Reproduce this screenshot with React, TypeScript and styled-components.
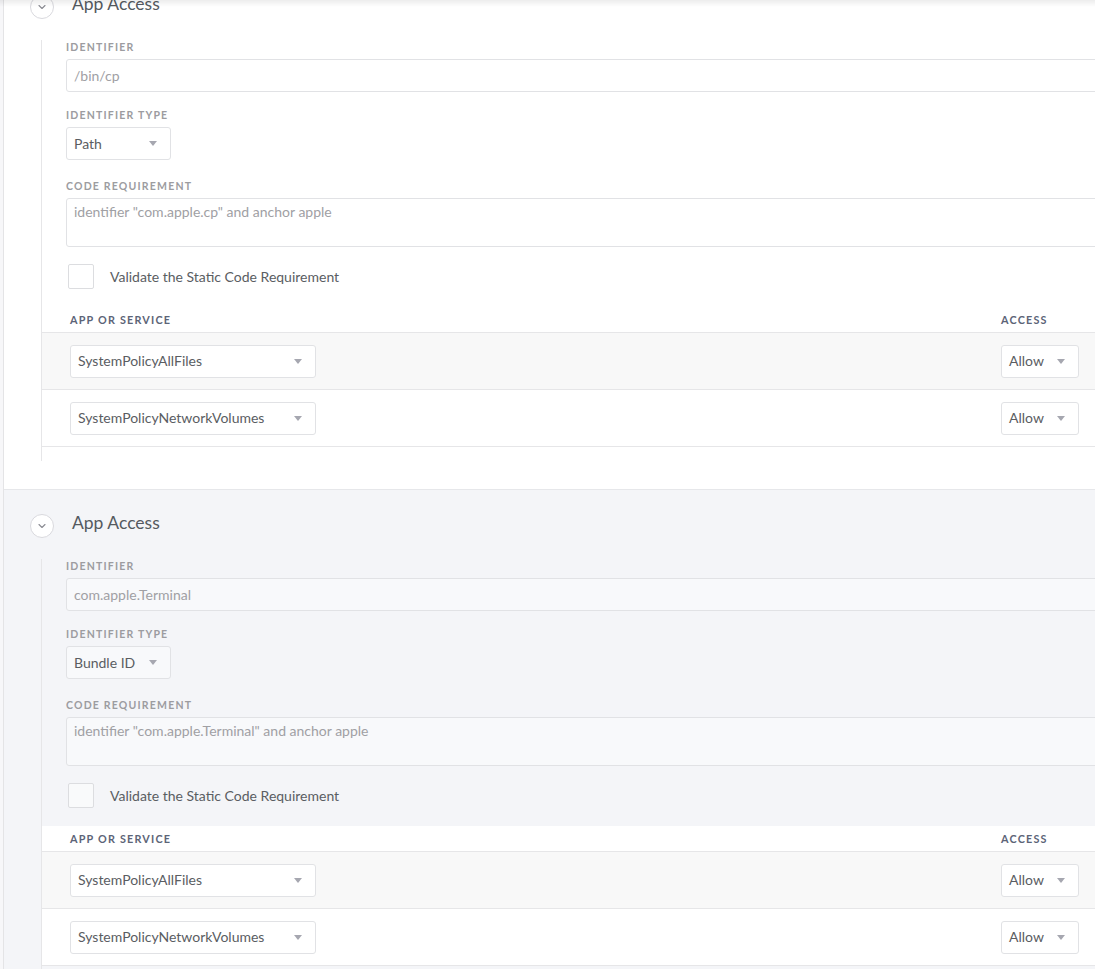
import React from "react";
import styled, { createGlobalStyle } from "styled-components";

const GlobalStyle = createGlobalStyle`
  html, body {
    margin: 0;
    padding: 0;
    background: #f7f7f9;
    overflow: hidden;
  }
  body {
    font-family: "Lato", "Liberation Sans", sans-serif;
    color: #555;
  }
`;

const TopShadow = styled.div`
  position: fixed;
  left: 0;
  top: 0;
  width: 100%;
  height: 7px;
  background: linear-gradient(to bottom, rgba(0, 0, 0, 0.07), rgba(0, 0, 0, 0));
  z-index: 5;
`;

const Page = styled.div`
  margin-top: -29px;
  margin-left: 3px;
  width: 1150px;
  border-left: 1px solid #e4e4e6;
  background: #ffffff;
`;

const Section = styled.section<{ $tinted?: boolean }>`
  background: ${(p) => (p.$tinted ? "#f4f5f8" : "#ffffff")};
  border-top: ${(p) => (p.$tinted ? "1px solid #e6e7ea" : "none")};
  padding: ${(p) => (p.$tinted ? "24px 0 29px 0" : "24px 0 28px 0")};
`;

const Header = styled.div`
  display: flex;
  align-items: center;
  gap: 18px;
  padding-left: 26px;
  height: 24px;
`;

const Toggle = styled.div`
  width: 24px;
  height: 24px;
  box-sizing: border-box;
  border-radius: 50%;
  border: 1px solid #d9d9de;
  background: #ffffff;
  display: flex;
  align-items: center;
  justify-content: center;
`;

const Title = styled.h2`
  margin: 0;
  font-size: 17.5px;
  font-weight: 400;
  color: #555a60;
  line-height: 20px;
  margin-top: -7px;
`;

const Body = styled.div`
  margin-top: 21px;
  margin-left: 37px;
  border-left: 1px solid #e6e6e8;
  padding-bottom: 14px;
`;

const Fields = styled.div`
  padding-left: 24px;
`;

const FieldGroup = styled.div<{ $space?: number }>`
  margin-top: ${(p) => p.$space ?? 0}px;
`;

const Label = styled.div`
  font-size: 10.5px;
  font-weight: 700;
  letter-spacing: 1.2px;
  text-transform: uppercase;
  color: #9c9ca0;
  line-height: 14px;
  margin-bottom: 5px;
`;

const Control = styled.div<{ $tinted?: boolean; $width?: number; $tall?: boolean }>`
  box-sizing: border-box;
  width: ${(p) => (p.$width ? `${p.$width}px` : "100%")};
  height: ${(p) => (p.$tall ? 49 : 33)}px;
  border: 1px solid #e1e2e5;
  border-radius: 3px;
  background: ${(p) => (p.$tinted ? "#f8f9fb" : "#ffffff")};
  padding: ${(p) => (p.$tall ? "4px 7px" : "0 7px")};
  display: flex;
  align-items: ${(p) => (p.$tall ? "flex-start" : "center")};
  font-size: 14px;
  line-height: 18px;
`;

const Value = styled.span<{ $muted?: boolean }>`
  color: ${(p) => (p.$muted ? "#a0a0a4" : "#5a5d62")};
  flex: 1;
  white-space: nowrap;
`;

const Caret = styled.span`
  width: 0;
  height: 0;
  border-left: 4px solid transparent;
  border-right: 4px solid transparent;
  border-top: 5px solid #a6a7b0;
  margin-right: 6px;
  margin-left: 8px;
`;

const CheckRow = styled.div`
  margin-top: 17px;
  display: flex;
  align-items: center;
  gap: 16px;
  padding-left: 2px;
`;

const Box = styled.div<{ $tinted?: boolean }>`
  width: 26px;
  height: 25px;
  box-sizing: border-box;
  border: 1px solid #dcdde0;
  border-radius: 2px;
  background: ${(p) => (p.$tinted ? "#f9fafb" : "#ffffff")};
`;

const CheckLabel = styled.span`
  font-size: 14px;
  color: #5a5d62;
`;

const Table = styled.div`
  margin-top: 18px;
  background: #ffffff;
`;

const Row = styled.div<{ $head?: boolean; $shade?: boolean }>`
  display: grid;
  grid-template-columns: 1fr 153px;
  align-items: center;
  height: ${(p) => (p.$head ? 25 : 56)}px;
  padding-left: 28px;
  border-bottom: 1px solid #e6e6e8;
  background: ${(p) => (p.$shade ? "#f8f8f8" : "#ffffff")};
`;

const HeadCell = styled.div`
  font-size: 10.8px;
  font-weight: 700;
  letter-spacing: 1.2px;
  text-transform: uppercase;
  color: #5c6477;
`;

const Chevron = () => (
  <svg width="8" height="6" viewBox="0 0 8 6" fill="none">
    <path d="M1 1.5 L4 4.5 L7 1.5" stroke="#8a8b92" strokeWidth="1.1" strokeLinecap="round" strokeLinejoin="round" />
  </svg>
);

type Select = { value: string; width: number; tinted?: boolean };

const Dropdown = ({ value, width, tinted }: Select) => (
  <Control $width={width} $tinted={tinted}>
    <Value>{value}</Value>
    <Caret />
  </Control>
);

type AccessProps = {
  identifier: string;
  type: string;
  requirement: string;
  tinted?: boolean;
};

const services = ["SystemPolicyAllFiles", "SystemPolicyNetworkVolumes"];

const AppAccess = ({ identifier, type, requirement, tinted }: AccessProps) => (
  <Section $tinted={tinted}>
    <Header>
      <Toggle>
        <Chevron />
      </Toggle>
      <Title>App Access</Title>
    </Header>
    <Body>
      <Fields>
        <FieldGroup>
          <Label>Identifier</Label>
          <Control $tinted={tinted}>
            <Value $muted>{identifier}</Value>
          </Control>
        </FieldGroup>
        <FieldGroup $space={16}>
          <Label>Identifier Type</Label>
          <Dropdown value={type} width={105} tinted={tinted} />
        </FieldGroup>
        <FieldGroup $space={19}>
          <Label>Code Requirement</Label>
          <Control $tinted={tinted} $tall>
            <Value $muted>{requirement}</Value>
          </Control>
        </FieldGroup>
        <CheckRow>
          <Box $tinted={tinted} />
          <CheckLabel>Validate the Static Code Requirement</CheckLabel>
        </CheckRow>
      </Fields>
      <Table>
        <Row $head>
          <HeadCell>App or Service</HeadCell>
          <HeadCell>Access</HeadCell>
        </Row>
        {services.map((s, i) => (
          <Row key={s} $shade={i === 0}>
            <Dropdown value={s} width={246} />
            <Dropdown value="Allow" width={78} />
          </Row>
        ))}
      </Table>
    </Body>
  </Section>
);

const App = () => (
  <>
    <GlobalStyle />
    <TopShadow />
    <Page>
      <AppAccess
        identifier="/bin/cp"
        type="Path"
        requirement={'identifier "com.apple.cp" and anchor apple'}
      />
      <AppAccess
        tinted
        identifier="com.apple.Terminal"
        type="Bundle ID"
        requirement={'identifier "com.apple.Terminal" and anchor apple'}
      />
    </Page>
  </>
);

export default App;
